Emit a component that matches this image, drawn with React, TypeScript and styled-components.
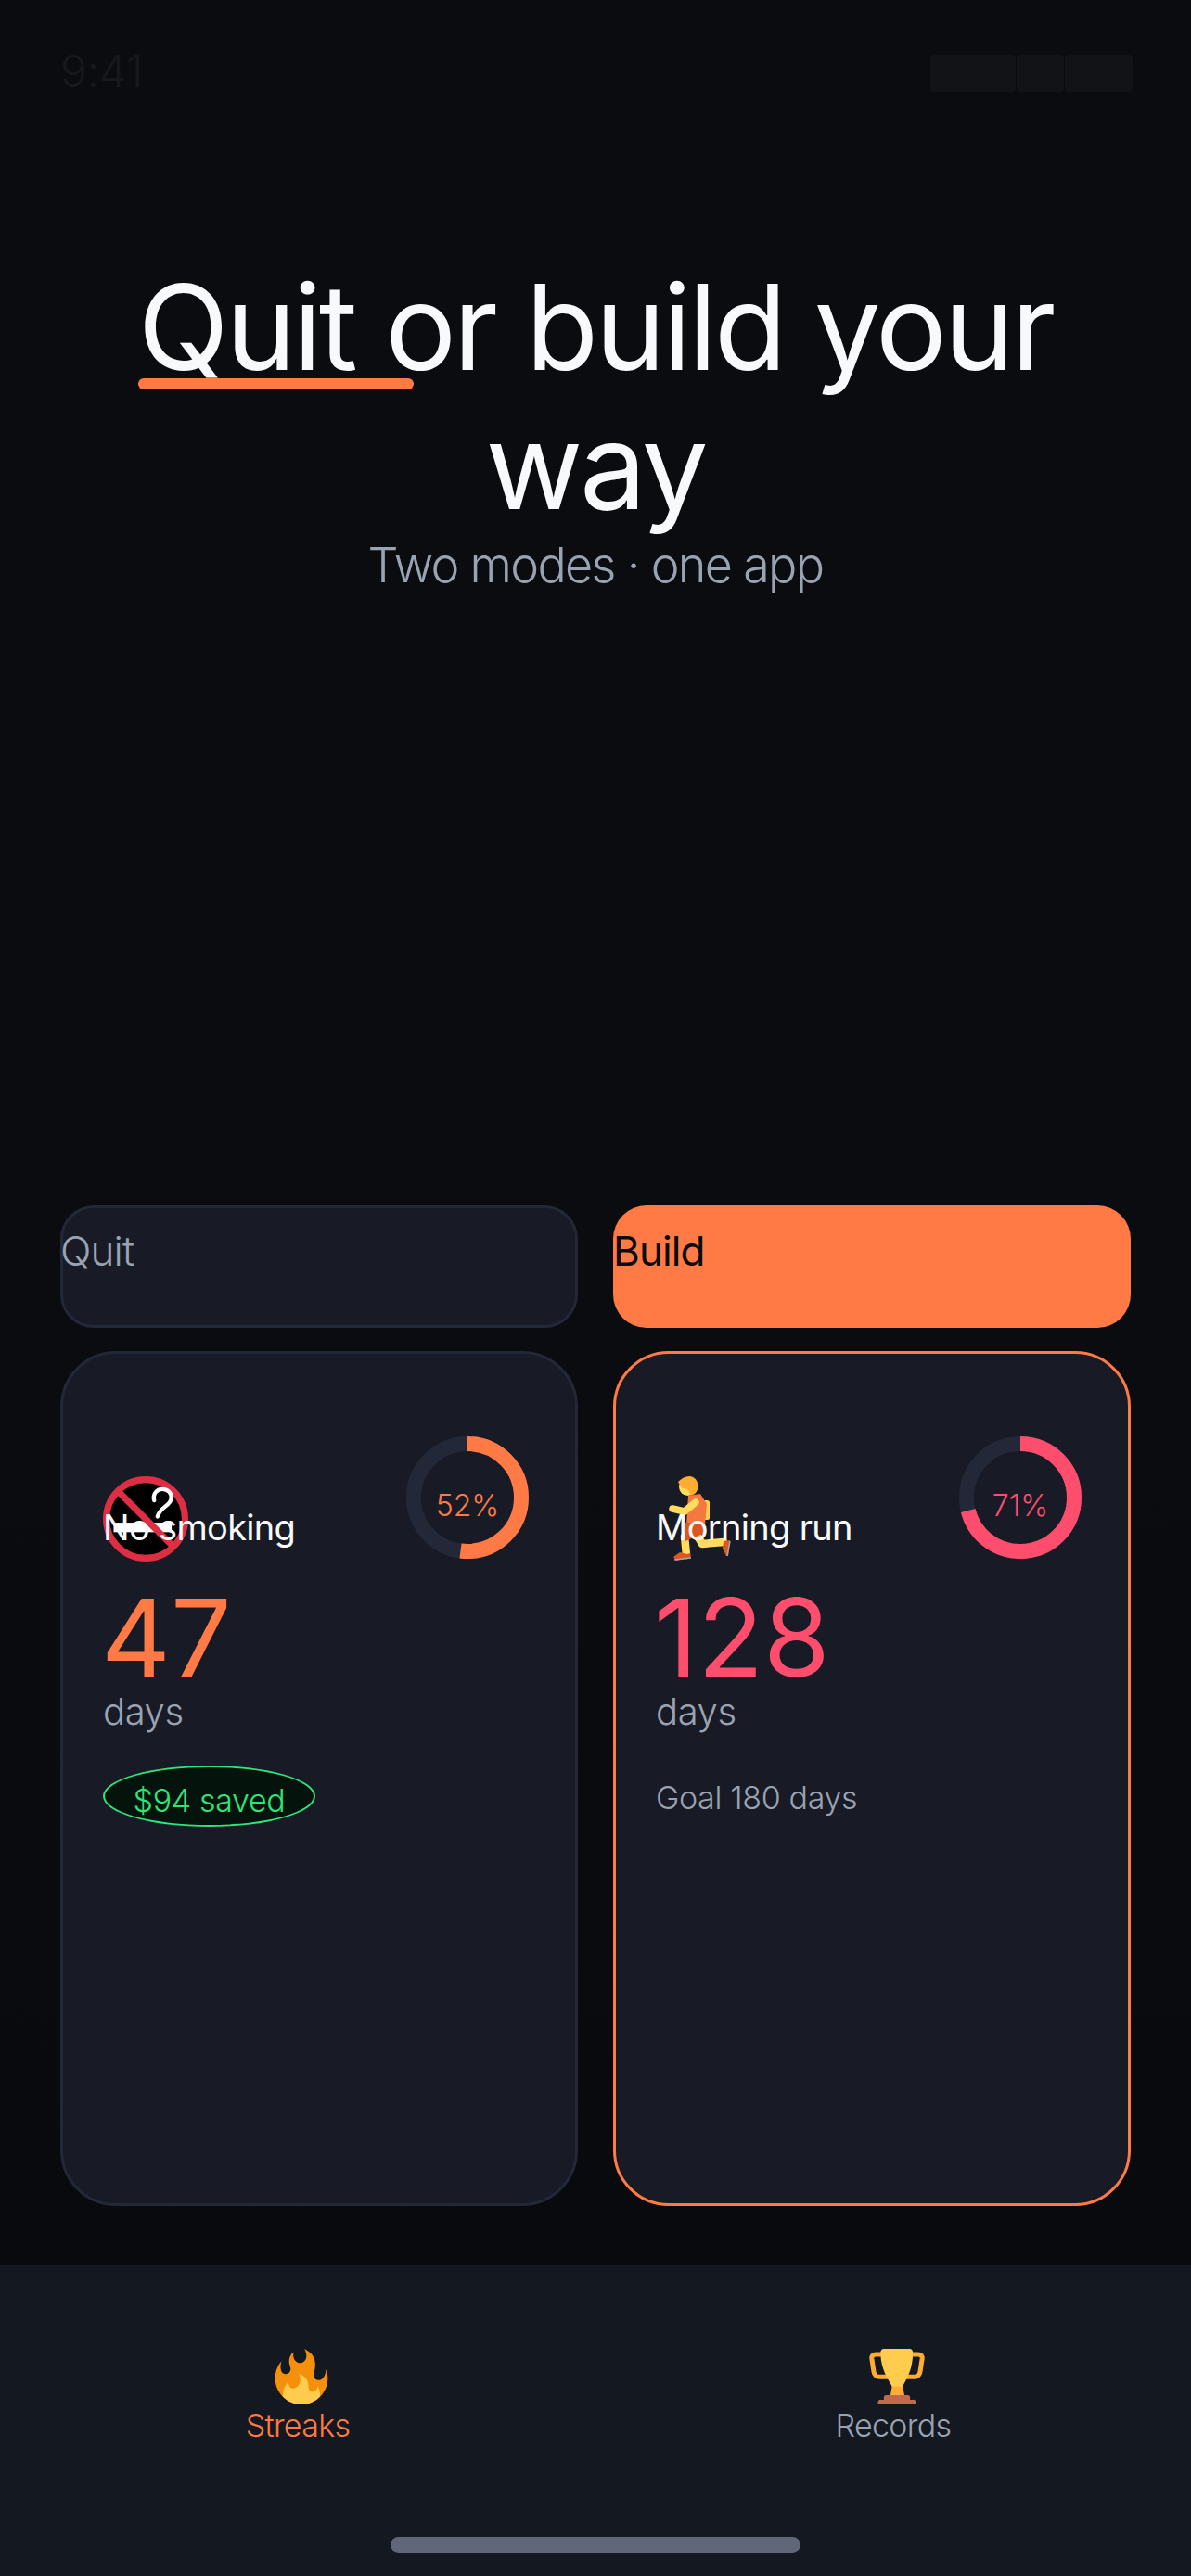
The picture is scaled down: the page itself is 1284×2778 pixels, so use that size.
import React from "react";
import styled, { createGlobalStyle } from "styled-components";

const Global = createGlobalStyle`
  html, body { margin: 0; padding: 0; background: #0b0c10; }
  * { box-sizing: border-box; }
`;

const Page = styled.div`
  width: 1284px;
  height: 2778px;
  display: flex;
  flex-direction: column;
  background: linear-gradient(180deg, #0b0c10 0%, #0b0c10 50%, #090a0d 88%);
  font-family: Inter, "Noto Sans", sans-serif;
  overflow: hidden;
`;

const StatusBar = styled.div`
  height: 272px;
  padding: 59px 63px 0 65px;
  display: flex;
  justify-content: space-between;
  align-items: flex-start;
`;

const Clock = styled.div`
  font-size: 48px;
  line-height: 35px;
  font-weight: 300;
  letter-spacing: -0.01em;
  color: #17181c;
`;

const StatusIcons = styled.div`
  display: flex;
  gap: 1px;
`;

const StatusSlot = styled.div<{ $w: number }>`
  width: ${(p) => p.$w}px;
  height: 40px;
  border-radius: 4px;
  background: #121317;
`;

const Hero = styled.header`
  height: 1028px;
  padding: 6px 65px 0;
  text-align: center;
`;

const Title = styled.h1`
  margin: 0;
  font-size: 128px;
  line-height: 150px;
  font-weight: 400;
  letter-spacing: -0.025em;
  color: #f8f9fb;
`;

const Accent = styled.span`
  position: relative;
  &::after {
    content: "";
    position: absolute;
    left: 0;
    width: 297px;
    bottom: 10px;
    height: 12px;
    border-radius: 6px;
    background: #ff7a45;
  }
`;

const Subtitle = styled.p`
  margin: -2px 0 0;
  font-size: 52px;
  line-height: 68px;
  font-weight: 300;
  letter-spacing: -0.032em;
  color: #9aa3b2;
`;

const Columns = styled.main`
  flex: 1;
  padding: 0 65px;
  display: grid;
  grid-template-columns: 558px 558px;
  column-gap: 38px;
  grid-template-rows: 132px 922px;
  row-gap: 25px;
  align-content: start;
`;

const Tab = styled.div<{ $active?: boolean }>`
  border-radius: 36px;
  border: ${(p) => (p.$active ? "none" : "3px solid #232838")};
  background: ${(p) => (p.$active ? "#ff7a45" : "#181b25")};
  color: ${(p) => (p.$active ? "#0a0b0f" : "#9aa3b2")};
  font-size: 44px;
  font-weight: ${(p) => (p.$active ? 400 : 300)};
  letter-spacing: -0.02em;
  line-height: 54px;
  padding-top: ${(p) => (p.$active ? "22px" : "19px")};
  text-indent: ${(p) => (p.$active ? "0" : "-3px")};
`;

const Card = styled.section<{ $active?: boolean }>`
  position: relative;
  border-radius: 60px;
  border: 3px solid ${(p) => (p.$active ? "#ff7a45" : "#232838")};
  background: #181b25;
  padding: 132px 43px 0;
`;

const EmojiSlot = styled.div`
  width: 92px;
  height: 92px;
  & > svg {
    display: block;
  }
`;

const HabitName = styled.div`
  margin-top: -60px;
  position: relative;
  font-size: 38px;
  line-height: 46px;
  letter-spacing: -0.018em;
  color: #f8f9fb;
  font-weight: 400;
`;

const Count = styled.div<{ $c: string }>`
  margin-top: 36px;
  margin-left: -2px;
  font-size: 116px;
  line-height: 120px;
  font-weight: 400;
  letter-spacing: 0;
  color: ${(p) => p.$c};
`;

const Unit = styled.div`
  font-size: 40px;
  line-height: 48px;
  font-weight: 300;
  letter-spacing: -0.01em;
  color: #9aa3b2;
  margin-top: -4px;
`;

const Saved = styled.div`
  margin-top: 34px;
  width: 229px;
  height: 66px;
  border-radius: 50%;
  border: 2px solid #2ee57a;
  background: #04140c;
  color: #2ee57a;
  font-size: 34px;
  line-height: 42px;
  font-weight: 300;
  letter-spacing: -0.01em;
  text-align: center;
  padding-top: 15px;
`;

const Goal = styled.div`
  margin-top: 48px;
  font-size: 34px;
  line-height: 42px;
  font-weight: 300;
  letter-spacing: -0.01em;
  color: #9aa3b2;
`;

const RingWrap = styled.div`
  position: absolute;
  top: 89px;
  right: 50px;
  width: 132px;
  height: 132px;
`;

const RingLabel = styled.div<{ $c: string }>`
  position: absolute;
  inset: 0;
  display: flex;
  align-items: center;
  justify-content: center;
  padding-top: 16px;
  font-size: 32px;
  font-weight: 300;
  color: ${(p) => p.$c};
`;

const Ring = ({ pct, color }: { pct: number; color: string }) => {
  const r = 58;
  const c = 2 * Math.PI * r;
  return (
    <RingWrap>
      <svg width="132" height="132" viewBox="0 0 132 132">
        <circle cx="66" cy="66" r={r} fill="none" stroke="#232838" strokeWidth="16" />
        <circle
          cx="66"
          cy="66"
          r={r}
          fill="none"
          stroke={color}
          strokeWidth="16"
          strokeDasharray={`${(c * pct) / 100} ${c}`}
          transform="rotate(-90 66 66)"
        />
      </svg>
      <RingLabel $c={color}>{pct}%</RingLabel>
    </RingWrap>
  );
};

const Nav = styled.nav`
  position: relative;
  height: 335px;
  background: #141820;
  display: grid;
  grid-template-columns: 1fr 1fr;
  padding-top: 90px;
`;

const NavItem = styled.div<{ $active?: boolean }>`
  display: flex;
  flex-direction: column;
  align-items: center;
  color: ${(p) => (p.$active ? "#ff7a45" : "#9aa3b2")};
  font-size: 34px;
  line-height: 40px;
  font-weight: 300;
  letter-spacing: -0.02em;
`;

const NavIcon = styled.div`
  width: 60px;
  height: 60px;
  margin: 0 0 3px 7px;
  & > svg {
    display: block;
  }
`;

const HomeBar = styled.div`
  position: absolute;
  left: 421px;
  bottom: 25px;
  width: 442px;
  height: 17px;
  border-radius: 9px;
  background: #616779;
`;

const NoSmokingIcon = () => (
  <svg width="92" height="92" viewBox="0 0 36 36">
    <circle cx="18" cy="18" r="16.6" fill="#000" stroke="#dd2e44" strokeWidth="2.8" />
    <rect x="4.5" y="19.6" width="24.5" height="4" fill="#fff" />
    <path
      d="M21.6 10.2C20.9 7.4 22.8 5.4 25 5.4c2.6 0 4.2 2 3.8 4.2-.5 2.8-4.6 3.4-5.8 7.4"
      fill="none"
      stroke="#fff"
      strokeWidth="1.7"
      strokeLinecap="round"
    />
    <path d="M5.6 5.6L30.4 30.4" stroke="#dd2e44" strokeWidth="2.8" />
  </svg>
);

const RunnerIcon = () => (
  <svg width="92" height="92" viewBox="0 0 92 92" fill="none">
    <rect x="50" y="26" width="8" height="21" rx="2.5" fill="#ffcc4d" />
    <path d="M31 65L33 85" stroke="#ffdc5d" strokeWidth="8.5" strokeLinecap="round" />
    <path d="M43 61L50 73L73 71" stroke="#ffdc5d" strokeWidth="8.5" strokeLinejoin="round" strokeLinecap="round" />
    <path d="M35 21L48 19L55 30L53 52L33 53Z" fill="#f4783f" />
    <path d="M32 50L52 50L51 62L41 66L32 70Z" fill="#dd551f" />
    <path d="M43 28L31 38L18 35" stroke="#ffdc5d" strokeWidth="7.5" strokeLinejoin="round" strokeLinecap="round" />
    <circle cx="34.5" cy="11.5" r="9.5" fill="#ffdc5d" />
    <path d="M24 6C28 2 32 0 36 0C42 0 45.5 5 45.5 11C45.5 16.5 41.5 21 37 20.5C37 15 33 12.5 28 13C27 10 25 8 24 6Z" fill="#ffac33" />
    <path d="M19 87L26 82L34 84L37 83L38 88L22 91Z" fill="#dd551f" />
    <path d="M73 70L80 69L78 86L76 86L72 78Z" fill="#dd551f" />
    <path d="M20 90L38 88" stroke="#99aab5" strokeWidth="1.4" />
    <path d="M80 70L77 86" stroke="#99aab5" strokeWidth="1.4" />
  </svg>
);

const FlameIcon = () => (
  <svg width="60" height="60" viewBox="0 0 36 36">
    <path
      fill="#f4900c"
      d="M35 19c0-2.062-.367-4.039-1.04-5.868-.46 5.389-3.333 8.157-6.335 6.868-2.812-1.208-.917-5.917-.777-8.164.236-3.809-.012-8.169-6.931-11.794 2.875 5.5.333 8.917-2.333 9.125-2.958.231-5.667-2.542-4.667-7.042-3.238 2.386-3.332 6.402-2.333 9 1.042 2.708-.042 4.958-2.583 5.208-2.84.28-4.418-3.041-2.963-8.333C2.52 10.965 1 14.805 1 19c0 9.389 7.611 17 17 17s17-7.611 17-17z"
    />
    <path
      fill="#ffcc4d"
      d="M28.394 23.999c.148 3.084-2.561 4.293-4.019 3.709-2.106-.843-1.541-2.291-2.083-5.291s-2.625-5.083-5.708-6c2.25 6.333-1.247 8.667-3.08 9.084-1.872.426-3.753-.001-3.968-4.007C7.352 23.668 6 26.676 6 30c0 .368.023.73.055 1.09C9.125 34.124 13.342 36 18 36s8.875-1.876 11.945-4.91c.032-.36.055-.722.055-1.09 0-2.187-.584-4.236-1.606-6.001z"
    />
  </svg>
);

const TrophyIcon = () => (
  <svg width="60" height="60" viewBox="0 0 36 36" fill="none">
    <path
      d="M9 3.6H4.2C2.5 3.6 1.5 4.6 1.7 6.2L3 14.8C3.3 16.8 4.7 18.2 6.6 18.2H29.4C31.3 18.2 32.7 16.8 33 14.8L34.3 6.2C34.5 4.6 33.5 3.6 31.8 3.6H27"
      stroke="#ffac33"
      strokeWidth="3"
    />
    <path d="M15 23h6.5l1.5 8H13.6z" fill="#ffac33" />
    <path
      d="M9.5 0H26.2C27.6 0 28.3 1 28.3 2.5C28.3 12 25.2 18 21.6 24.5H14.9C11.2 18 7.4 12 7.4 2.5C7.4 1 8.1 0 9.5 0Z"
      fill="#ffcc4d"
    />
    <path d="M11 30H25A1.5 1.5 0 0 1 26.5 31.5V33H28A1.5 1.5 0 0 1 29.3 36H6.7A1.5 1.5 0 0 1 8 33H9.5V31.5A1.5 1.5 0 0 1 11 30Z" fill="#c1694f" />
  </svg>
);

export default function App() {
  return (
    <Page>
      <Global />
      <StatusBar>
        <Clock>9:41</Clock>
        <StatusIcons>
          <StatusSlot $w={92} />
          <StatusSlot $w={51} />
          <StatusSlot $w={73} />
        </StatusIcons>
      </StatusBar>
      <Hero>
        <Title>
          <Accent>Quit </Accent>or build your way
        </Title>
        <Subtitle>Two modes · one app</Subtitle>
      </Hero>
      <Columns>
        <Tab>Quit</Tab>
        <Tab $active>Build</Tab>
        <Card>
          <Ring pct={52} color="#ff7a45" />
          <EmojiSlot>
            <NoSmokingIcon />
          </EmojiSlot>
          <HabitName>No smoking</HabitName>
          <Count $c="#ff7a45">47</Count>
          <Unit>days</Unit>
          <Saved>$94 saved</Saved>
        </Card>
        <Card $active>
          <Ring pct={71} color="#ff4d6d" />
          <EmojiSlot>
            <RunnerIcon />
          </EmojiSlot>
          <HabitName>Morning run</HabitName>
          <Count $c="#ff4d6d">128</Count>
          <Unit>days</Unit>
          <Goal>Goal 180 days</Goal>
        </Card>
      </Columns>
      <Nav>
        <NavItem $active>
          <NavIcon>
            <FlameIcon />
          </NavIcon>
          Streaks
        </NavItem>
        <NavItem>
          <NavIcon>
            <TrophyIcon />
          </NavIcon>
          Records
        </NavItem>
        <HomeBar />
      </Nav>
    </Page>
  );
}
